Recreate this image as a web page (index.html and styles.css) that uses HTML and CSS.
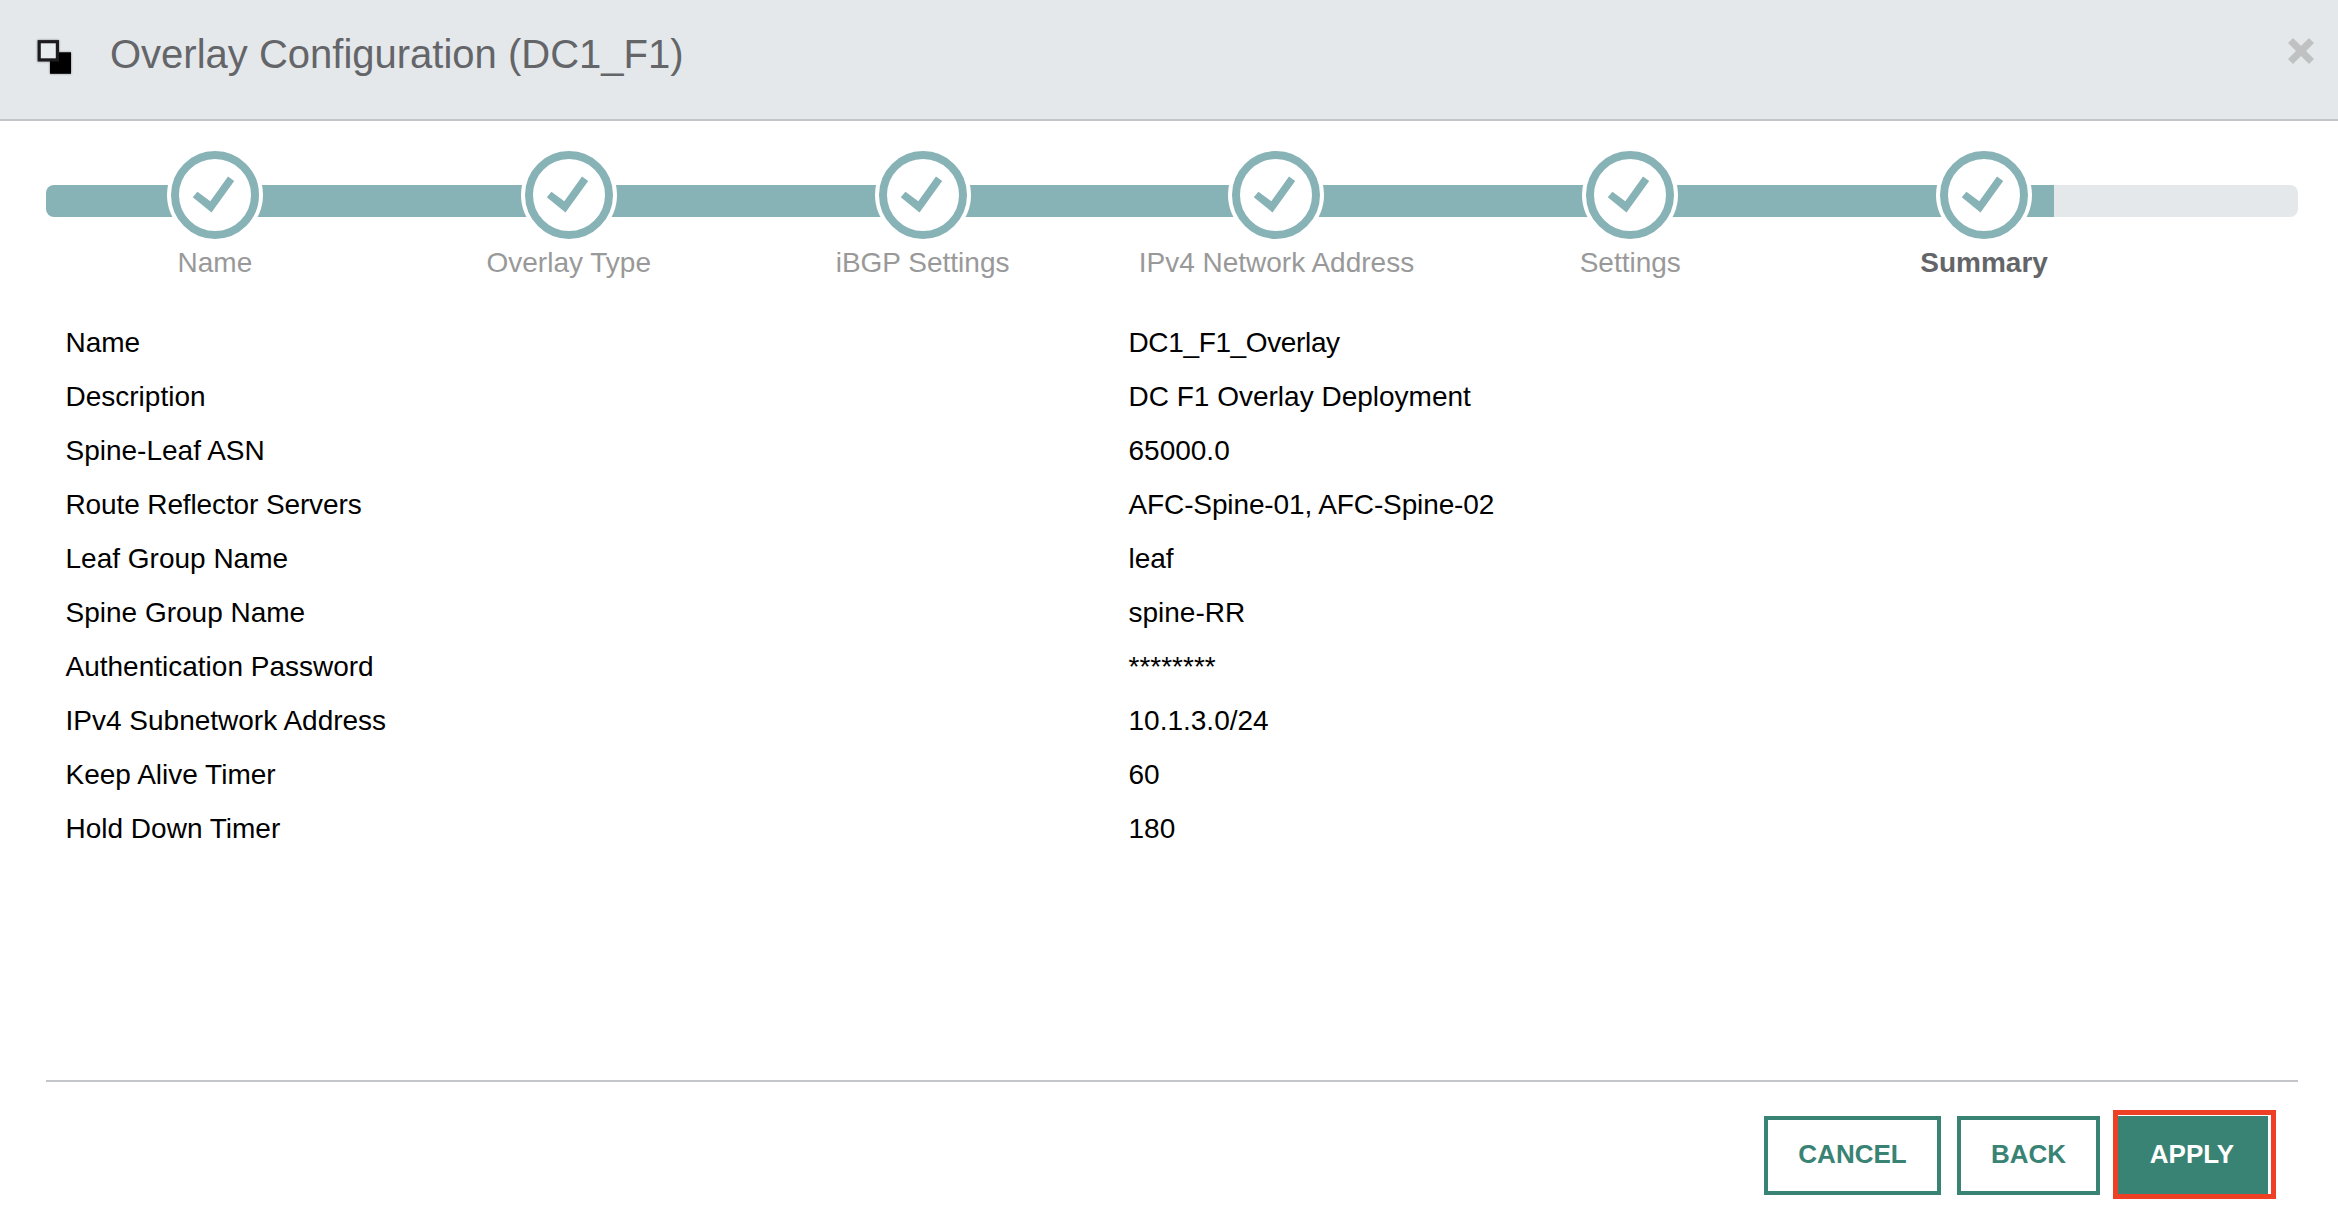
FILE: index.html
```html
<!DOCTYPE html>
<html lang="en">
<head>
<meta charset="utf-8">
<title>Overlay Configuration</title>
<link rel="stylesheet" href="styles.css">
</head>
<body>
<svg width="0" height="0" class="defs"><symbol id="check" viewBox="0 0 88 88"><path d="M21.8 46.3 26.4 40.7 39.3 50.2 57 25.6 63.2 30 40.5 61.5Z"/></symbol></svg>
<div class="dialog">
  <header class="header">
    <svg class="icon" viewBox="0 0 36 36"><rect x="14" y="13.3" width="21" height="21.5"/><rect class="frame" x="3.2" y="2.7" width="18.2" height="18.2"/></svg>
    <h1 class="title">Overlay Configuration (DC1_F1)</h1>
    <svg class="close" viewBox="0 0 26 26"><path d="M5 0 13 8 21 0 26 5 18 13 26 21 21 26 13 18 5 26 0 21 8 13 0 5Z"/></svg>
  </header>
  <main class="body">
    <nav class="wizard">
      <ol class="steps">
        <li class="step"><span class="dot"><svg><use href="#check"/></svg></span><span class="label">Name</span></li>
        <li class="step"><span class="dot"><svg><use href="#check"/></svg></span><span class="label">Overlay Type</span></li>
        <li class="step"><span class="dot"><svg><use href="#check"/></svg></span><span class="label">iBGP Settings</span></li>
        <li class="step"><span class="dot"><svg><use href="#check"/></svg></span><span class="label">IPv4 Network Address</span></li>
        <li class="step"><span class="dot"><svg><use href="#check"/></svg></span><span class="label">Settings</span></li>
        <li class="step current"><span class="dot"><svg><use href="#check"/></svg></span><span class="label">Summary</span></li>
      </ol>
    </nav>
    <dl class="summary">
      <dt>Name</dt><dd class="tight">DC1_F1_Overlay</dd>
      <dt>Description</dt><dd>DC F1 Overlay Deployment</dd>
      <dt>Spine-Leaf ASN</dt><dd>65000.0</dd>
      <dt class="snug">Route Reflector Servers</dt><dd class="snug">AFC-Spine-01, AFC-Spine-02</dd>
      <dt>Leaf Group Name</dt><dd>leaf</dd>
      <dt>Spine Group Name</dt><dd>spine-RR</dd>
      <dt>Authentication Password</dt><dd>********</dd>
      <dt>IPv4 Subnetwork Address</dt><dd>10.1.3.0/24</dd>
      <dt>Keep Alive Timer</dt><dd>60</dd>
      <dt>Hold Down Timer</dt><dd>180</dd>
    </dl>
    <footer class="footer">
      <button class="btn cancel">CANCEL</button>
      <button class="btn back">BACK</button>
      <div class="highlight"><button class="btn apply">APPLY</button></div>
    </footer>
  </main>
</div>
</body>
</html>
```
FILE: styles.css
```css
* { box-sizing: border-box; }
body { margin: 0; background: #fff; font-family: "Liberation Sans", Arial, sans-serif; font-size: 28px; color: #000; }
.defs { position: absolute; }
.dialog { width: 2338px; height: 1222px; display: flex; flex-direction: column; overflow: hidden; }

.header { height: 121px; flex: none; display: flex; align-items: flex-start; background: #e4e8eb; border-bottom: 2px solid #c2c4c7; padding: 0 24px 0 36px; }
.icon { width: 36px; height: 36px; margin-top: 39px; filter: drop-shadow(0 0 1px rgba(0, 0, 0, .45)); }
.icon .frame { fill: #e9ecef; stroke: #1c1c1e; stroke-width: 3.2; }
.title { flex: 1; margin: 31px 0 0 38px; font-size: 40px; line-height: 46px; font-weight: 400; color: #646569; }
.close { width: 26px; height: 26px; margin-top: 38px; fill: #bfc1c2; }

.body { flex: 1; display: flex; flex-direction: column; padding: 30px 40px 0 46px; }
.wizard { position: relative; height: 150px; }
.wizard::before { content: ""; position: absolute; left: 0; top: 34px; width: 2252px; height: 32px; border-radius: 8px; background: linear-gradient(to right, #87b2b6 2008px, #e4e8eb 2008px); }
.steps { position: relative; list-style: none; margin: 0 0 0 -8px; padding: 0; width: 2123px; display: grid; grid-template-columns: repeat(6, 1fr); }
.step { display: flex; flex-direction: column; align-items: center; }
.dot { width: 88px; height: 88px; border-radius: 50%; background: #fff; border: 8px solid #87b2b6; box-shadow: 0 0 0 4px #fff; }
.dot svg { display: block; width: 88px; height: 88px; margin: -8px; fill: #87b2b6; }
.label { margin-top: 8px; line-height: 32px; color: #999; white-space: nowrap; }
.current .label { font-weight: 700; color: #646569; }

.summary { flex: 1; margin: 0; padding: 15px 0 0 19.5px; display: grid; grid-template-columns: 1063px 1fr; grid-auto-rows: 54px; line-height: 54px; }
.summary dd { margin: 0; }
.summary .tight { letter-spacing: -.36px; }
.summary .snug { letter-spacing: -.12px; }

.footer { height: 142px; width: 2252px; border-top: 2px solid #c4c5c9; padding: 28px 22px 0 0; display: flex; justify-content: flex-end; align-items: flex-start; }
.btn { font: 700 26px/30px "Liberation Sans", Arial, sans-serif; height: 79px; margin: 6px 0 0; border: 4px solid #398374; background: #fff; color: #398374; padding: 0 0 3px; border-radius: 0; }
.cancel { width: 177px; margin-right: 16px; }
.back { width: 143px; margin-right: 13px; }
.highlight { width: 163px; height: 89px; border: 5px solid #ee4025; background: #fff; }
.apply { display: block; width: 150px; margin: 1px 0 0; height: 78px; padding-right: 2px; background: #398374; color: #fff; }
```
